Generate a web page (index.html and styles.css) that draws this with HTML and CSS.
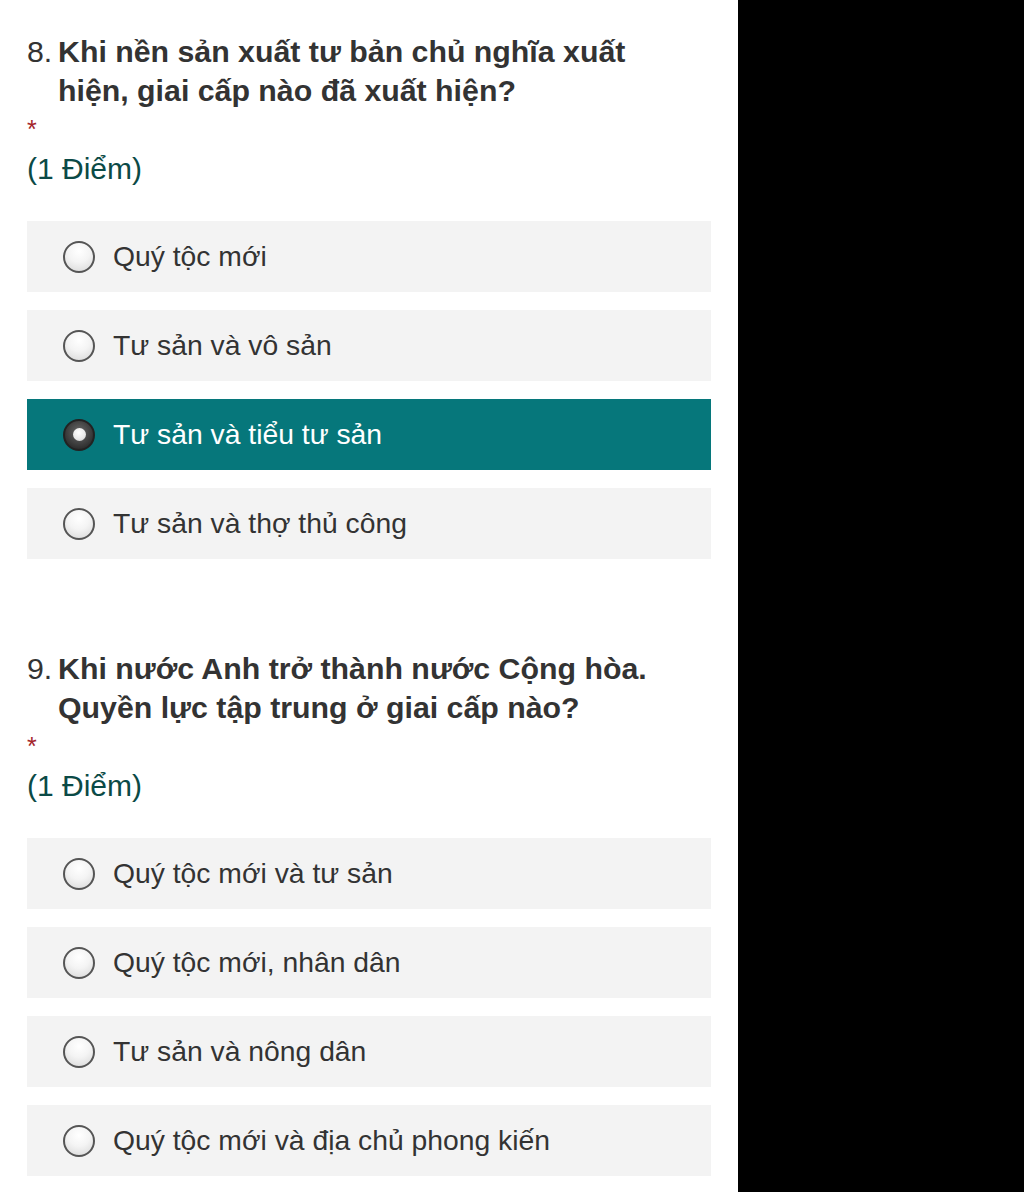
FILE: index.html
```html
<!DOCTYPE html>
<html lang="vi">
<head>
<meta charset="utf-8">
<title>Quiz</title>
<link rel="stylesheet" href="styles.css">
</head>
<body>
<div class="page">
  <main class="form">
    <section class="question">
      <div class="q-title"><span class="q-num">8.</span><span class="q-text">Khi nền sản xuất tư bản chủ nghĩa xuất hiện, giai cấp nào đã xuất hiện?</span></div>
      <div class="required">*</div>
      <div class="points">(1 Điểm)</div>
      <div class="options">
        <label class="option"><span class="radio"></span><span class="opt-text">Quý tộc mới</span></label>
        <label class="option"><span class="radio"></span><span class="opt-text">Tư sản và vô sản</span></label>
        <label class="option selected"><span class="radio"></span><span class="opt-text">Tư sản và tiểu tư sản</span></label>
        <label class="option"><span class="radio"></span><span class="opt-text">Tư sản và thợ thủ công</span></label>
      </div>
    </section>
    <section class="question">
      <div class="q-title"><span class="q-num">9.</span><span class="q-text">Khi nước Anh trở thành nước Cộng hòa. Quyền lực tập trung ở giai cấp nào?</span></div>
      <div class="required">*</div>
      <div class="points">(1 Điểm)</div>
      <div class="options">
        <label class="option"><span class="radio"></span><span class="opt-text">Quý tộc mới và tư sản</span></label>
        <label class="option"><span class="radio"></span><span class="opt-text">Quý tộc mới, nhân dân</span></label>
        <label class="option"><span class="radio"></span><span class="opt-text">Tư sản và nông dân</span></label>
        <label class="option"><span class="radio"></span><span class="opt-text">Quý tộc mới và địa chủ phong kiến</span></label>
      </div>
    </section>
  </main>
  <div class="side"></div>
</div>
</body>
</html>
```
FILE: styles.css
```css
html, body {
  margin: 0;
  padding: 0;
  background: #000;
}
body {
  font-family: "Liberation Sans", Arial, sans-serif;
  color: #333;
}
.page {
  display: flex;
  width: 1024px;
  height: 1192px;
  overflow: hidden;
}
.form {
  width: 738px;
  flex: none;
  background: #fff;
  padding: 32px 27px 0 27px;
  box-sizing: border-box;
  display: flex;
  flex-direction: column;
  gap: 90px;
}
.side {
  flex: 1;
  background: #000;
}
.q-title {
  display: flex;
  font-size: 30.3px;
  line-height: 39px;
  color: #333;
}
.q-num {
  width: 31px;
  flex: none;
  font-weight: normal;
}
.q-text {
  font-weight: bold;
  padding-right: 36px;
}
.required {
  height: 39px;
  font-size: 25px;
  line-height: 38px;
  color: #a4262c;
}
.points {
  font-size: 30px;
  line-height: 39px;
  color: #0b4a46;
  margin-bottom: 33px;
}
.options {
  display: flex;
  flex-direction: column;
  gap: 18px;
}
.option {
  display: flex;
  align-items: center;
  height: 71px;
  background: #f3f3f3;
  padding-left: 36px;
  font-size: 28.3px;
  color: #333;
}
.radio {
  width: 32px;
  height: 32px;
  box-sizing: border-box;
  border: 2px solid #555;
  border-radius: 50%;
  background: radial-gradient(circle at 50% 30%, #ffffff 0%, #f4f4f4 45%, #d6d6d6 100%);
  margin-right: 18px;
  flex: none;
  position: relative;
}
.option.selected {
  background: #06777b;
  color: #fff;
}
.option.selected .radio {
  border-color: #222;
  background: radial-gradient(circle at 50% 40%, #6a6a6a 0%, #3a3a3a 60%, #1c1c1c 100%);
}
.option.selected .radio::after {
  content: "";
  position: absolute;
  left: 50%;
  top: 50%;
  width: 13px;
  height: 13px;
  margin: -6.5px 0 0 -6.5px;
  border-radius: 50%;
  background: radial-gradient(circle at 45% 35%, #ffffff 0%, #e8e8e8 60%, #bdbdbd 100%);
}
```
